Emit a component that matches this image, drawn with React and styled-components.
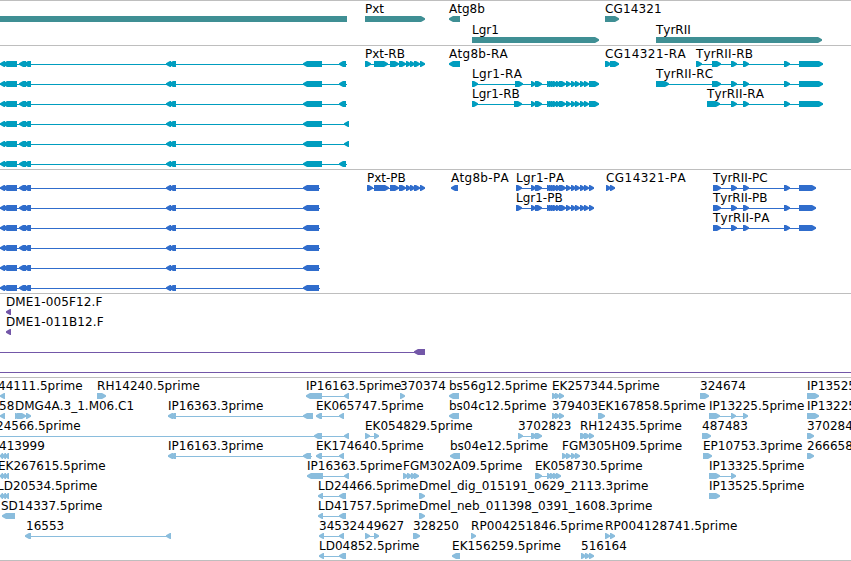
import React from 'react';
import styled, { createGlobalStyle } from 'styled-components';

const GlobalStyle = createGlobalStyle`
  * {
    box-sizing: border-box;
  }

  body {
    margin: 0;
    background: #ffffff;
    overflow: hidden;
  }
`;

const WIDTH = 851;

// feature: label, start of the label, strand, exons and optionally the intron line
const feature = (label, x, strand, exons, line) => ({ label, x, strand, exons, line });

const FWD = 1;
const REV = -1;

// letter spacing of the labels that run wider than the font's own advance
const tracking = {
  CG14321: 0.15,
  'Atg8b-RA': 0.3,
  'Atg8b-PA': 0.3,
  'CG14321-RA': 0.45,
  'CG14321-PA': 0.45,
  'Lgr1-RA': 0.35,
  'Lgr1-PA': 0.25,
  'TyrRII-RB': 0.15,
  'TyrRII-RC': 0.15,
  'TyrRII-RA': 0.15,
  'TyrRII-PA': 0.25,
  'DME1-005F12.F': 0.12,
  'DME1-011B12.F': 0.12,
  'RH14240.5prime': 0.07,
  'RP004251846.5prime': 0.1,
  'RP004128741.5prime': 0.1,
  'EK156259.5prime': 0.08,
  'Dmel_dig_015191_0629_2113.3prime': 0.06,
  'Dmel_neb_011398_0391_1608.3prime': 0.06,
};

const leftExons = [[0, 5], [3, 17], [19, 26], [24, 31], [166, 171], [169, 176]];
const leftTranscript = (exon, end) =>
  feature('', 0, REV, [...leftExons, [303, 322], exon], [0, end]);
const leftProtein = () => feature('', 0, REV, [...leftExons, [303, 319]], [0, 320]);

const lgrCluster = [
  [531, 536], [535, 542], [547, 552], [549, 554], [551, 556], [553, 558], [556, 561],
  [559, 566], [566, 571], [571, 576], [575, 580], [580, 585], [584, 589],
];
const tyrCommon = [[731, 737], [743, 749], [784, 790]];
const pxtCommon = [[390, 399], [399, 406], [406, 411], [410, 415], [414, 420], [420, 425]];
const smallCluster = [[0, 3], [2, 6], [5, 9]];
const ekCluster = [[552, 557], [555, 560], [559, 564]];

const tracks = [
  {
    id: 'genes',
    color: '#3f8f94',
    rowHeight: 21,
    padding: 2,
    rows: [
      [
        feature('', 0, REV, [[-8, 347]]),
        feature('Pxt', 365, FWD, [[365, 425]]),
        feature('Atg8b', 449, REV, [[449, 460]]),
        feature('CG14321', 605, FWD, [[605, 619]]),
      ],
      [
        feature('Lgr1', 472, FWD, [[472, 599]]),
        feature('TyrRII', 656, FWD, [[656, 822]]),
      ],
    ],
  },
  {
    id: 'transcripts',
    color: '#009dbf',
    padding: 3,
    rows: [
      [
        leftTranscript([339, 346], 347),
        feature('Pxt-RB', 365, FWD, [[365, 371], [374, 388], ...pxtCommon]),
        feature('Atg8b-RA', 449, REV, [[449, 460]]),
        feature('CG14321-RA', 605, FWD, [[605, 611], [610, 619]]),
        feature('TyrRII-RB', 696, FWD, [[696, 702], [712, 721], ...tyrCommon, [799, 823]]),
      ],
      [
        leftTranscript([339, 346], 347),
        feature('Lgr1-RA', 472, FWD, [[472, 478], [515, 523], ...lgrCluster, [589, 599]]),
        feature('TyrRII-RC', 656, FWD, [[656, 669], [712, 721], ...tyrCommon, [799, 823]]),
      ],
      [
        leftTranscript([339, 346], 347),
        feature('Lgr1-RB', 472, FWD, [[472, 478], [514, 522], ...lgrCluster, [589, 599]]),
        feature('TyrRII-RA', 707, FWD, [[707, 720], ...tyrCommon, [799, 823]]),
      ],
      [leftTranscript([344, 349], 349)],
      [leftTranscript([344, 349], 349)],
      [leftTranscript([339, 346], 347)],
    ],
  },
  {
    id: 'proteins',
    color: '#306dcc',
    padding: 3,
    rows: [
      [
        leftProtein(),
        feature('Pxt-PB', 367, FWD, [[367, 373], [374, 389], ...pxtCommon]),
        feature('Atg8b-PA', 451, REV, [[451, 458]]),
        feature('Lgr1-PA', 516, FWD, [[516, 522], ...lgrCluster, [589, 594]]),
        feature('CG14321-PA', 606, FWD, [[606, 611], [610, 615]]),
        feature('TyrRII-PC', 713, FWD, [[713, 721], ...tyrCommon, [799, 816]]),
      ],
      [
        leftProtein(),
        feature('Lgr1-PB', 516, FWD, [[516, 522], ...lgrCluster, [589, 594]]),
        feature('TyrRII-PB', 713, FWD, [[713, 721], ...tyrCommon, [799, 816]]),
      ],
      [
        leftProtein(),
        feature('TyrRII-PA', 713, FWD, [[713, 721], ...tyrCommon, [799, 816]]),
      ],
      [leftProtein()],
      [leftProtein()],
      [leftProtein()],
    ],
  },
  {
    id: 'bacs',
    color: '#7357a8',
    padding: 3,
    rows: [
      [feature('DME1-005F12.F', 6, REV, [[6, 11]])],
      [feature('DME1-011B12.F', 6, REV, [[6, 11]])],
      [feature('', 0, REV, [[414, 425]], [0, 425])],
      [feature('', 0, REV, [], [0, WIDTH])],
    ],
  },
  {
    id: 'ests',
    color: '#8abddd',
    padding: 2,
    rows: [
      [
        feature('44111.5prime', -2, REV, [[0, 5]]),
        feature('RH14240.5prime', 97, FWD, [[97, 106]]),
        feature('IP16163.5prime', 306, REV, [[306, 322], [344, 349]]),
        feature('370374', 400, FWD, [[400, 405]]),
        feature('bs56g12.5prime', 449, REV, [[449, 459]]),
        feature('EK257344.5prime', 552, FWD, ekCluster),
        feature('324674', 700, FWD, [[700, 709]]),
        feature('IP13525.5prime', 807, FWD, [[807, 819]]),
      ],
      [
        feature('58', -1, REV, [[0, 5]]),
        feature('DMG4A.3_1.M06.C1', 15, FWD, [[15, 20], [17, 26], [26, 31]]),
        feature('IP16363.3prime', 168, REV, [[168, 173], [170, 176], [303, 313]]),
        feature('EK065747.5prime', 316, REV, [[316, 322], [339, 344]]),
        feature('bs04c12.5prime', 449, REV, [[449, 459]]),
        feature('379403', 552, FWD, ekCluster),
        feature('EK167858.5prime', 598, FWD, [[598, 605]]),
        feature('IP13225.5prime', 709, FWD, [[709, 720], [731, 736], [743, 748]]),
        feature('IP13225.3prime', 807, FWD, [[807, 819]]),
      ],
      [
        feature('24566.5prime', -4, REV, [[314, 322], [344, 349]], [0, 349]),
        feature('EK054829.5prime', 365, FWD, [[365, 370], [374, 379]]),
        feature('3702823', 518, FWD, [[518, 523], [531, 537], [535, 542]]),
        feature('RH12435.5prime', 580, FWD, [[580, 586], [584, 590], [589, 594]]),
        feature('487483', 702, FWD, [[702, 711]]),
        feature('3702840', 807, FWD, [[807, 814]]),
      ],
      [
        feature('413999', -1, REV, smallCluster),
        feature('IP16163.3prime', 168, REV, [[168, 173], [170, 176], [303, 311]], [168, 312]),
        feature('EK174640.5prime', 316, REV, [[316, 322], [339, 344]]),
        feature('bs04e12.5prime', 450, REV, [[450, 460]]),
        feature('FGM305H09.5prime', 562, FWD, [[562, 567], [566, 571], [571, 576], [575, 580]]),
        feature('EP10753.3prime', 703, FWD, [[703, 712]]),
        feature('2666583', 807, FWD, [[807, 814]]),
      ],
      [
        feature('EK267615.5prime', -2, REV, smallCluster),
        feature('IP16363.5prime', 307, REV, [[307, 323], [344, 349]]),
        feature('FGM302A09.5prime', 403, FWD, [[403, 408], [407, 412], [411, 416], [414, 419]]),
        feature('EK058730.5prime', 535, FWD, [[535, 542], [547, 552], [550, 555], [553, 558], [556, 561]]),
        feature('IP13325.5prime', 709, FWD, [[709, 720], [731, 736]]),
      ],
      [
        feature('LD20534.5prime', -3, REV, smallCluster),
        feature('LD24466.5prime', 318, REV, [[318, 323], [339, 346]]),
        feature('Dmel_dig_015191_0629_2113.3prime', 419, FWD, [[419, 425]]),
        feature('IP13525.5prime', 709, FWD, [[709, 720]]),
      ],
      [
        feature('SD14337.5prime', 1, REV, [[2, 15]]),
        feature('LD41757.5prime', 318, REV, [[318, 323], [339, 346]]),
        feature('Dmel_neb_011398_0391_1608.3prime', 419, FWD, [[419, 425]]),
      ],
      [
        feature('16553', 26, REV, [[25, 31], [166, 171]]),
        feature('345324', 319, REV, [[319, 324], [339, 344]]),
        feature('49627', 366, FWD, [[365, 370], [374, 379]]),
        feature('328250', 413, FWD, [[413, 420]]),
        feature('RP004251846.5prime', 471, FWD, [[471, 476]]),
        feature('RP004128741.5prime', 605, FWD, [[605, 610], [610, 615]]),
      ],
      [
        feature('LD04852.5prime', 319, REV, [[319, 324], [339, 346]]),
        feature('EK156259.5prime', 452, REV, [[452, 460]]),
        feature('516164', 581, FWD, [[581, 586], [585, 590], [589, 594]]),
      ],
    ],
  },
];

// outline of an exon pointing right, as [distance from the tip, y]
const exonPoints = ([start, end], strand) => {
  const size = end - start;
  const tip = Math.min(5, size);
  const outline = [
    [size, 0], [tip - 1, 0], [tip / 2 - 0.4, 1], [0, 2.2],
    [0, 3.8], [tip / 2 - 0.4, 5], [tip - 1, 6], [size, 6],
  ];
  return outline
    .map(([d, y]) => `${strand === FWD ? end - d : start + d},${y}`)
    .join(' ');
};

const Glyph = ({ strand, exons, line }) => {
  const [from, to] = line || [exons[0][0], exons[exons.length - 1][1]];
  return (
    <g>
      {(line || exons.length > 1) && <rect x={from} y="3" width={to - from} height="1" />}
      {exons.map((exon, i) => (
        <polygon key={i} points={exonPoints(exon, strand)} />
      ))}
    </g>
  );
};

const Row = ({ features, height }) => (
  <RowStyled $height={height}>
    {features.filter((f) => f.label).map((f) => (
      <Label key={f.label} $x={f.x} $tracking={tracking[f.label] || 0}>{f.label}</Label>
    ))}
    <Glyphs width={WIDTH} height="6">
      {features.map((f, i) => (
        <Glyph key={i} {...f} />
      ))}
    </Glyphs>
  </RowStyled>
);

const App = () => (
  <>
    <GlobalStyle />
    <Browser>
      {tracks.map((track) => (
        <Track key={track.id} $color={track.color} $padding={track.padding}>
          {track.rows.map((features, i) => (
            <Row key={i} features={features} height={track.rowHeight || 20} />
          ))}
        </Track>
      ))}
    </Browser>
  </>
);

const Browser = styled.main`
  display: flex;
  flex-direction: column;
  width: ${WIDTH}px;
  height: 561px;
  overflow: hidden;
  background: #ffffff;
  border-bottom: 1px solid #bebebe;
`;

const Track = styled.section`
  display: flex;
  flex-direction: column;
  flex: none;
  border-top: 1px solid #bebebe;
  padding-bottom: ${(props) => props.$padding}px;
  color: ${(props) => props.$color};
`;

const RowStyled = styled.div`
  position: relative;
  height: ${(props) => props.$height}px;
  padding-top: 15px;
`;

const Label = styled.span`
  position: absolute;
  top: 1px;
  left: ${(props) => props.$x}px;
  color: #000000;
  font-family: 'DejaVu Sans', sans-serif;
  font-size: 12px;
  font-kerning: none;
  letter-spacing: ${(props) => props.$tracking}px;
  line-height: 15px;
  white-space: nowrap;
`;

const Glyphs = styled.svg`
  display: block;
  fill: currentColor;
`;

export default App;
